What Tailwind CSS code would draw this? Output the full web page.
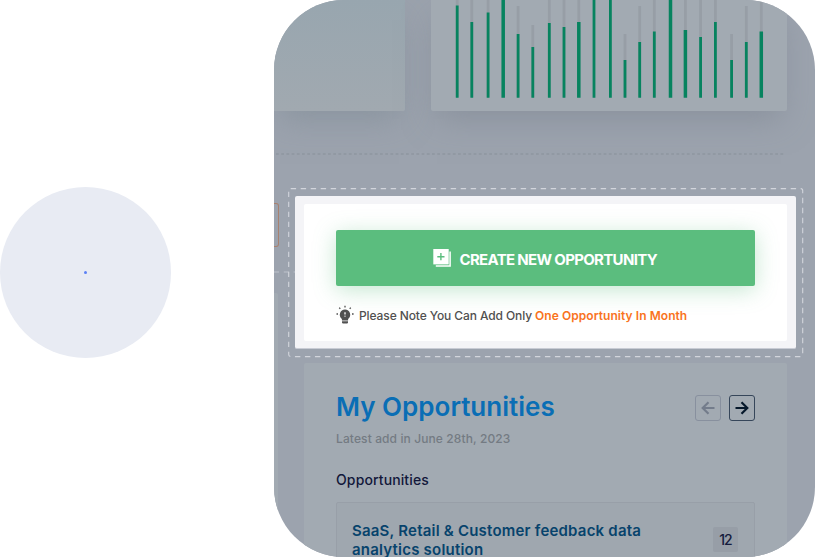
<!DOCTYPE html>
<html lang="en">
<head>
<meta charset="utf-8">
<title>Opportunities</title>
<script src="https://cdn.jsdelivr.net/npm/@tailwindcss/browser@4"></script>
</head>
<body class="w-[815px] h-[557px] overflow-hidden bg-white flex font-['Inter',sans-serif]">
  <aside class="w-[274px] shrink-0 pt-[187px]">
    <div class="size-[171px] rounded-full bg-[#e8ebf3] flex items-center justify-center">
      <span class="size-[3px] rounded-full bg-[#5b80f5]"></span>
    </div>
  </aside>

  <main class="relative w-[541px] h-[556.5px] shrink-0 rounded-[70px] overflow-hidden bg-[#9ca3ae] flex flex-col">
    <section class="h-[111px] shrink-0 flex gap-[26px]">
      <div class="w-[131px] rounded-br-[2px] bg-linear-to-b from-[#98a6af] to-[#a1a9b0] shadow-[0_14px_30px_-6px_rgba(120,133,144,0.5)]"></div>
      <div class="w-[356px] rounded-b-[2px] bg-[#a2aab2] shadow-[0_14px_30px_-6px_rgba(120,128,140,0.5)]">
        <svg class="block" width="356" height="111" viewBox="431 0 356 111" fill="none" stroke-linecap="butt">
          <path stroke="#979ea6" stroke-width="2.8" d="M457.2 0V97M471.8 0V97M488.1 0V97M518.1 6V97M532.8 25V97M549.3 0V97M564 0V97M578.8 0V97M625 34V97M639.7 6V97M654.3 0V97M685.4 0V97M700.6 0V97M715.4 0V97M731.6 34V97M746.3 6V97M761.3 2V97"/>
          <path stroke="#07835f" stroke-width="2.8" d="M457.2 5.5V97.7M471.8 22V97.7M488.1 12.5V97.7M518.1 34V97.7M532.8 47V97.7M549.3 23V97.7M564 27V97.7M594 0V97.7M610.4 0V97.7M625 60V97.7M639.7 42V97.7M654.3 31.5V97.7M700.6 37V97.7M715.4 22V97.7M731.6 60V97.7M746.3 42V97.7"/>
          <path stroke="#07835f" stroke-width="3.5" d="M503.2 0V97.7M578.8 22V97.7M670.5 0V97.7M685.4 30V97.7M761.3 31.5V97.7"/>
        </svg>
      </div>
    </section>

    <svg class="block shrink-0 mt-[42px]" width="541" height="2" fill="none"><path d="M2 1H511" stroke="#8f96a0" stroke-width="1.4" stroke-dasharray="2.8 2.4"/></svg>

    <div class="flex mt-[41px]">
      <div class="w-[21px] shrink-0 pt-[7px]">
        <div class="w-[5px] h-[44px] rounded-r-[3px] border border-l-0 border-[#a8816f]"></div>
        <svg class="block mt-[24px]" width="24" height="2"><path d="M0 1H21" stroke="#bec3cb" stroke-width="1.2" stroke-dasharray="5 4.8"/></svg>
        <div class="w-[4px] h-[280px] mt-[20px] bg-[#a2aab2] rounded-tr-[2px]"></div>
      </div>

      <div class="w-[500.5px] shrink-0">
        <section class="h-[153px] rounded-[2px] bg-[#f4f4f7] border-b border-[#c9ccd5] pt-[8px] pl-[9px] pr-[8.5px]">
          <div class="h-[137px] rounded-[2px] bg-white px-[32px] pt-[26px]">
            <button class="w-[418.5px] h-[56px] rounded-[2px] bg-[#5bbd7e] shadow-[0_4px_22px_rgba(91,189,126,0.36)] flex items-center text-white pl-[97px]">
              <svg class="shrink-0" width="18" height="18" viewBox="0 0 18 18" fill="none">
                <path d="M.3 0H15.7V15.4H.3Z" fill="white"/>
                <path d="M17.1 2.5V17H2.8" stroke="white" stroke-width="1.5"/>
                <path d="M7.9 4.1V11.3M4.3 7.7H11.5" stroke="#5bbd7e" stroke-width="1.4"/>
              </svg>
              <span class="ml-[8.5px] mt-[3px] text-[15px] leading-[20px] font-bold tracking-[-0.68px] whitespace-nowrap">CREATE NEW OPPORTUNITY</span>
            </button>
            <div class="flex mt-[19px] h-[20px] items-center">
              <svg class="shrink-0" width="18" height="20" viewBox="0 0 18 20" fill="none">
                <path d="M9 4.4a5.3 5.3 0 0 0-3.1 9.5v1.5h6.2v-1.5A5.3 5.3 0 0 0 9 4.4Z" fill="#505050"/>
                <path d="M6 16.3h6v1.3q0 .8-.8.8H6.8q-.8 0-.8-.8Z" fill="#505050"/>
                <path d="M8.2 7.3h1.6v2.3H8.2ZM8.5 10.5h1v1.4h-1Z" fill="#ddd"/>
                <path d="M9 .8V2.4M3.2 2.6L4.3 3.8M14.8 2.6L13.7 3.8M.5 9H2M16 9h1.6" stroke="#505050" stroke-width="1.3"/>
              </svg>
              <p class="ml-[5px] mt-[2px] flex text-[12px] leading-[18px] whitespace-nowrap text-[#505050] font-medium"><span class="w-[176px] tracking-[-0.1px]">Please Note You Can Add Only</span><span class="text-[#f9731d] font-semibold tracking-[0.06px]">One Opportunity In Month</span></p>
            </div>
          </div>
        </section>

        <section class="ml-[9px] mt-[14px] w-[483px] h-[210px] bg-[#a2aab2] rounded-t-[2px] px-[32px] pt-[27px]">
          <div class="flex justify-between pt-[5px]">
            <h1 class="-mt-[5px] text-[26px] leading-[34px] font-semibold text-[#0a6eb5] tracking-[0.01px] whitespace-nowrap">My Opportunities</h1>
            <div class="flex gap-[8px]">
              <button class="size-[26px] rounded-[3px] border border-[#88909e] flex items-center justify-center text-[#737c8b]">
                <svg width="14" height="14" fill="none" stroke="currentColor" stroke-width="2.2"><path d="M13.5 7H1.8M7.5 1.2L1.7 7L7.5 12.8"/></svg>
              </button>
              <button class="size-[26px] rounded-[3px] border border-[#36465a] flex items-center justify-center text-[#06182b]">
                <svg width="14" height="14" fill="none" stroke="currentColor" stroke-width="2.2"><path d="M.5 7H12.2M6.5 1.2L12.3 7L6.5 12.8"/></svg>
              </button>
            </div>
          </div>
          <p class="mt-[6px] text-[12px] leading-[18px] font-medium text-[#747b83] tracking-[0.11px]">Latest add in June 28th, 2023</p>
          <h2 class="mt-[22px] text-[14px] leading-[20px] font-medium tracking-[0.12px] text-[#12183a]">Opportunities</h2>
          <div class="mt-[12px] w-[419px] h-[80px] border border-[#989fa8] bg-[#9fa7af] rounded-[2px] flex justify-between pl-[15px] pr-[16px]">
            <h3 class="pt-[18px] text-[15px] leading-[19px] font-semibold text-[#07436c] tracking-[0.21px] whitespace-nowrap">SaaS, Retail &amp; Customer feedback data<br>analytics solution</h3>
            <span class="mt-[24px] size-[25px] rounded-[2px] bg-[#979ea7] text-[14px] font-medium text-[#151c3d] flex items-center justify-center tracking-[-0.9px]">12</span>
          </div>
        </section>
      </div>
    </div>

    <svg class="absolute left-[14px] top-[188px]" width="516" height="170" fill="none">
      <rect x=".7" y=".6" width="514" height="168" rx="2" stroke="#d2d5dc" stroke-width="1.1" stroke-dasharray="5.4 4.6"/>
    </svg>
  </main>
</body>
</html>
